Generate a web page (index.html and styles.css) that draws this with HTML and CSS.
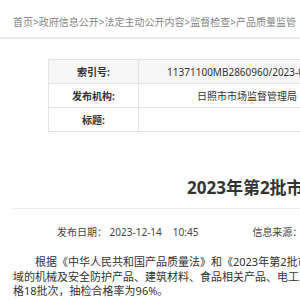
FILE: index.html
```html
<!DOCTYPE html>
<html lang="zh-CN">
<head>
<meta charset="utf-8">
<title>2023年第2批市级产品质量监督抽查结果</title>
<link rel="stylesheet" href="styles.css">
</head>
<body>
<div class="crumbs">
  <a href="#">首页</a><span class="sep">&gt;</span><a href="#">政府信息公开</a><span class="sep">&gt;</span><a href="#">法定主动公开内容</a><span class="sep">&gt;</span><a href="#">监督检查</a><span class="sep">&gt;</span><a href="#">产品质量监管</a>
</div>
<div class="page">
  <table class="meta">
    <tr class="shade">
      <th>索引号:</th>
      <td>11371100MB2860960/2023-00321</td>
    </tr>
    <tr>
      <th>发布机构:</th>
      <td>日照市市场监督管理局</td>
    </tr>
    <tr>
      <th>标题:</th>
      <td></td>
    </tr>
  </table>
  <div class="article">
    <h1 class="title">2023年第2批市级产品质量监督抽查结果公告</h1>
    <div class="info">
      <span class="date">发布日期： 2023-12-14</span>
      <span class="time">10:45</span>
      <span class="source">信息来源：日照市市场监督管理局</span>
    </div>
    <p class="body">根据《中华人民共和国产品质量法》和《2023年第2批市级产品质量监督抽查计划》，我局组织开展了产品质量监督抽查，抽查了生产、销售领<br>域的机械及安全防护产品、建筑材料、食品相关产品、电工及材料产品等共计450批次产品，抽查发现不合<br>格18批次，抽检合格率为96%。</p>
  </div>
</div>
</body>
</html>
```
FILE: styles.css
```css
html, body {
  margin: 0;
  padding: 0;
  background: #fff;
  overflow: hidden;
}
body {
  font-family: "Noto Sans", "Noto Sans CJK SC", sans-serif;
  color: #333;
}
.crumbs {
  padding: 15px 0 8px 13px;
  font-size: 10px;
  line-height: 14px;
  color: #858585;
  border-bottom: 2px solid #ececec;
  white-space: nowrap;
}
.crumbs a {
  color: #858585;
  text-decoration: none;
}
.page {
  width: 1000px;
  padding: 20px 0 0 13px;
}
.meta {
  margin-left: 35px;
  border-collapse: collapse;
  font-size: 10px;
}
.meta th, .meta td {
  border: 1px solid #e3e3e3;
  height: 23px;
  padding: 0;
  text-align: center;
  white-space: nowrap;
}
.meta th {
  width: 89px;
  font-weight: bold;
  color: #333;
}
.meta td {
  width: 216px;
  color: #333;
}
.meta .shade th, .meta .shade td {
  background: #f6f6f6;
}
.article {
  margin-top: 44px;
}
.title {
  margin: 0;
  padding: 0 0 8px 174px;
  font-size: 17px;
  line-height: 24px;
  font-weight: bold;
  color: #333;
  border-bottom: 1px solid #eee;
  white-space: nowrap;
}
.info {
  margin-top: 16px;
  padding-left: 44px;
  font-size: 10px;
  line-height: 14px;
  color: #444;
  display: flex;
  white-space: nowrap;
}
.time {
  margin-left: 11px;
}
.source {
  margin-left: 54px;
}
.body {
  margin: 16px 0 0;
  font-size: 11px;
  line-height: 14.5px;
  text-indent: 2em;
  color: #333;
  white-space: nowrap;
}
```
